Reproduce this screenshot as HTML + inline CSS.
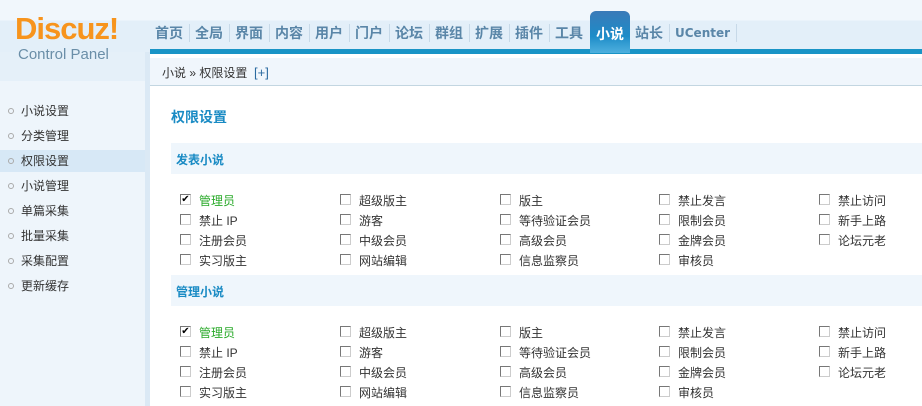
<!DOCTYPE html>
<html><head><meta charset="utf-8"><style>
*{margin:0;padding:0;box-sizing:border-box}
body{width:922px;height:406px;overflow:hidden;background:#fff;font:12px "Liberation Sans","Noto Sans CJK SC",sans-serif;color:#333;position:relative}
.a{position:absolute;white-space:nowrap}
#hdr{left:0;top:0;width:922px;height:52px;background:linear-gradient(#f1f7fc 0,#f1f7fc 20px,#e3eff9 21px,#e3eff9)}
#logo{left:15px;top:13px;font:bold 31px/32px "Liberation Sans",sans-serif;color:#f7941d;letter-spacing:-1px}
#cp{left:18px;top:46px;font-size:15px;line-height:18px;color:#6a8ea8}
#left{left:0;top:52px;width:145px;height:354px;background:#eef5fb}
#lhead{left:0;top:52px;width:145px;height:29px;background:#e5f0f9}
#vline{left:145px;top:52px;width:5px;height:354px;background:#dbe9f5}
.n{top:24px;font-size:14px;font-weight:bold;color:#5a86a8;line-height:18px}
.sep{top:24px;width:1px;height:18px;background:#c7d9e8}
#tab{left:590px;top:11px;width:40px;height:42px;background:linear-gradient(#3a7ab8,#1d8cc8 60%,#4fb0de);border-radius:6px 6px 0 0;color:#fff;font-size:14px;font-weight:bold;text-align:center;padding-top:13px}
#bar{left:150px;top:49px;width:772px;height:5px;background:#1994c6}
#crumb{left:150px;top:58px;width:772px;height:28px;background:#f0f6fc;border-bottom:1px solid #c3d6e1;padding:6px 0 0 12px;font-size:12px;color:#333}
.ml{left:0;width:145px;height:22px;padding-left:8px;line-height:22px;color:#333}
.ml i{display:inline-block;width:6px;height:6px;border:1px solid #aaa;border-radius:50%;margin-right:7px;vertical-align:1px}
.on{background:#d7e8f6}
.t{left:171px;top:107px;font-size:14px;font-weight:bold;color:#1a8bc4}
.sh{left:171px;width:751px;height:31px;background:#eff6fc;font-weight:bold;color:#1a8bc4;padding:8px 0 0 5px;font-size:12px}
.cb{width:11px;height:11px;border:1px solid #777;border-right-color:#ccc;border-bottom-color:#ccc;background:#fff;font-size:10px;line-height:9px;text-align:center;color:#000}
.g{color:#2aaa2a}
</style></head><body>
<div id="hdr" class="a"></div>
<div id="left" class="a"></div>
<div id="lhead" class="a"></div>
<div id="logo" class="a">Discuz!</div>
<div id="cp" class="a">Control Panel</div>
<div id="vline" class="a"></div>
<div id="bar" class="a"></div>
<div id="nav"></div>
<div id="tab" class="a">小说</div>
<div id="crumb" class="a">小说 » 权限设置 &nbsp;<span style="color:#2a6aa0;font-size:13px">[+]</span></div>
<div class="a ml" style="top:100px"><i></i>小说设置</div>
<div class="a ml" style="top:125px"><i></i>分类管理</div>
<div class="a ml on" style="top:150px"><i></i>权限设置</div>
<div class="a ml" style="top:175px"><i></i>小说管理</div>
<div class="a ml" style="top:200px"><i></i>单篇采集</div>
<div class="a ml" style="top:225px"><i></i>批量采集</div>
<div class="a ml" style="top:250px"><i></i>采集配置</div>
<div class="a ml" style="top:275px"><i></i>更新缓存</div>
<div class="a t">权限设置</div>
<div class="a sh" style="top:143px">发表小说</div>
<div class="a sh" style="top:275px">管理小说</div>
<div id="g1"></div>
<script>
var N=["首页","全局","界面","内容","用户","门户","论坛","群组","扩展","插件","工具","","站长","UCenter"],s="";
N.forEach(function(t,i){var x=155+i*40;if(t)s+='<div class="a n" style="left:'+x+'px'+(t=="UCenter"?';font-family:\'DejaVu Sans\',sans-serif;font-size:12px':'')+'">'+t+'</div>';
if(i!=10&&i!=11)s+='<div class="a sep" style="left:'+(x+(t=="UCenter"?61:34))+'px"></div>';});
document.getElementById("nav").innerHTML=s;
var L=[["管理员","超级版主","版主","禁止发言","禁止访问"],["禁止 IP","游客","等待验证会员","限制会员","新手上路"],["注册会员","中级会员","高级会员","金牌会员","论坛元老"],["实习版主","网站编辑","信息监察员","审核员"]];
var X=[180,340,500,659,819],h="";
[193,325].forEach(function(y0){L.forEach(function(r,i){r.forEach(function(t,j){var y=y0+i*20,f=(i==0&&j==0);
h+='<div class="a cb" style="left:'+X[j]+'px;top:'+(y+1)+'px">'+(f?'✔':'')+'</div><div class="a'+(f?' g':'')+'" style="left:'+(X[j]+19)+'px;top:'+(y-1)+'px">'+t+'</div>';});});});
document.getElementById("g1").innerHTML=h;
</script>
</body></html>
